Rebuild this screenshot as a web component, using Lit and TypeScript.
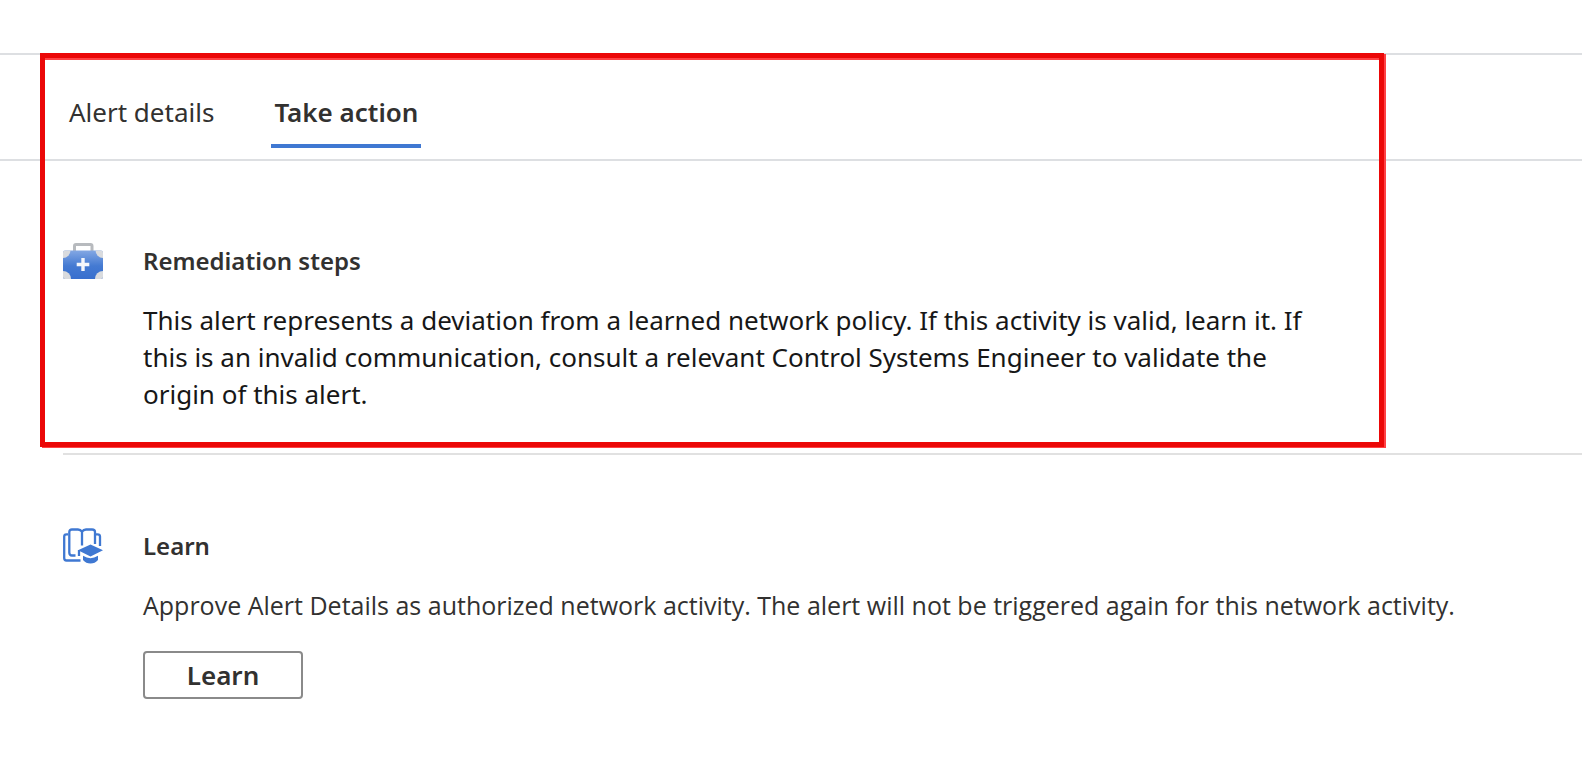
import { LitElement, html, css, svg } from "lit";
import { customElement, state } from "lit/decorators.js";

const toolkitIcon = svg`
  <svg viewBox="0 0 40 36" width="40" height="36" aria-hidden="true">
    <defs>
      <linearGradient id="case" x1="0" y1="0" x2="0" y2="1">
        <stop offset="0" stop-color="#85a9e4" />
        <stop offset="0.55" stop-color="#447ad2" />
        <stop offset="1" stop-color="#386fce" />
      </linearGradient>
      <clipPath id="body"><rect x="0" y="7.500" width="40" height="28.500" rx="2" /></clipPath>
    </defs>
    <path d="M11.5 8V3Q11.5 1.5 13 1.5H27.500Q29 1.500 29 3V8" fill="none" stroke="#b7babe" stroke-width="3" />
    <g clip-path="url(#body)">
      <rect x="0" y="7" width="40" height="29" fill="url(#case)" />
      <g fill="#d9dbde">
        <circle cx="0" cy="7.500" r="7.500" />
        <circle cx="40" cy="7.500" r="7.500" />
        <circle cx="0" cy="36" r="8" />
        <circle cx="40" cy="36" r="8" />
      </g>
    </g>
    <path d="M18.300 15H21.700V19.800H26.300V23.200H21.700V28H18.300V23.200H13.700V19.800H18.300Z" fill="#f5f7fb" />
  </svg>`;

const learnIcon = svg`
  <svg viewBox="0 0 40 36" width="40" height="36" aria-hidden="true">
    <g fill="none" stroke="#3f78d2" stroke-width="2.300" stroke-linecap="butt">
      <path d="M5 6.300H3.500Q1.200 6.300 1.200 8.500V30Q1.200 32.500 3.500 32.500H17.500" />
      <path d="M33 6.300H34.500Q37 6.300 37 8.500V18" />
      <path d="M12.500 27.500H9Q6.300 27.500 6.300 24.500V4Q6.300 1.500 9 1.500H15Q17.500 1.500 19 3.700Q20.500 1.500 23 1.500H29Q32 1.500 32 4V16" />
      <path d="M19 3.500V17.500" />
      <path d="M16 22V28" />
    </g>
    <path d="M15 22.200L27.500 16.500L40 22.200L27.500 28.500Z" fill="#3f78d2" />
    <path d="M20 27.800Q27.500 32.500 35 27.800V32Q32 35.500 27.500 35.500Q23 35.500 20 32Z" fill="#3f78d2" />
  </svg>`;

@customElement("app-root")
export class AppRoot extends LitElement {
  @state() private selected = "Take action";

  static styles = css`
    :host {
      display: block;
      padding-top: 53px;
      background: #fff;
      color: #323130;
      font-family: "Segoe UI", "Noto Sans", "Open Sans", sans-serif;
      font-size: 26px;
      line-height: 36px;
    }
    .highlighted {
      position: relative;
    }
    .frame {
      position: absolute;
      inset: 0 198px 8px 40px;
      border: 5px solid #eb0808;
      box-shadow: 2px 1px 0 #ff4245, inset 0 2px 0 #ff4245;
      pointer-events: none;
    }
    .tabs {
      display: flex;
      gap: 54px;
      padding: 39px 66px 11px;
      border-top: 2px solid #dddfe2;
      border-bottom: 2px solid #dddfe2;
    }
    .tab {
      padding: 0 3px 14px;
      border: 0;
      border-bottom: 4px solid transparent;
      background: none;
      color: inherit;
      font: inherit;
      cursor: pointer;
    }
    .tab.selected {
      border-bottom-color: #3f78d2;
      font-weight: 600;
    }
    .section {
      display: grid;
      grid-template-columns: 40px minmax(0, 1fr);
      column-gap: 40px;
      margin-left: 63px;
      padding-top: 82px;
    }
    .section.ruled {
      padding-bottom: 40px;
      border-bottom: 2px solid #e1e1e1;
    }
    .section.plain {
      padding-top: 73px;
    }
    .icon {
      display: flex;
    }
    h2 {
      margin: 0;
      font-size: 24px;
      font-weight: 600;
    }
    p {
      margin: 23px 0 0;
    }
    .steps {
      margin-right: 256px;
      color: #171717;
      line-height: 37px;
    }
    .note {
      font-family: "Segoe UI", "Open Sans", "Noto Sans", sans-serif;
      font-size: 25px;
    }
    .learn {
      display: block;
      min-width: 160px;
      height: 48px;
      margin-top: 28px;
      padding: 0 24px;
      border: 2px solid #8a8a8a;
      border-radius: 4px;
      background: #fff;
      color: inherit;
      font: inherit;
      font-weight: 600;
      cursor: pointer;
    }
  `;

  render() {
    return html`
      <div class="highlighted">
        <div class="tabs" role="tablist">
          ${["Alert details", "Take action"].map(
            (name) => html`<button
              class="tab ${name === this.selected ? "selected" : ""}"
              role="tab"
              aria-selected=${name === this.selected}
              @click=${() => (this.selected = name)}
            >${name}</button>`
          )}
        </div>
        <section class="section ruled">
          <div class="icon">${toolkitIcon}</div>
          <div>
            <h2>Remediation steps</h2>
            <p class="steps">
              This alert represents a deviation from a learned network policy. If this activity is
              valid, learn it. If this is an invalid communication, consult a relevant Control
              Systems Engineer to validate the origin of this alert.
            </p>
          </div>
        </section>
        <div class="frame"></div>
      </div>
      <section class="section plain">
        <div class="icon">${learnIcon}</div>
        <div>
          <h2>Learn</h2>
          <p class="note">
            Approve Alert Details as authorized network activity. The alert will not be triggered
            again for this network activity.
          </p>
          <button class="learn">Learn</button>
        </div>
      </section>
    `;
  }
}
